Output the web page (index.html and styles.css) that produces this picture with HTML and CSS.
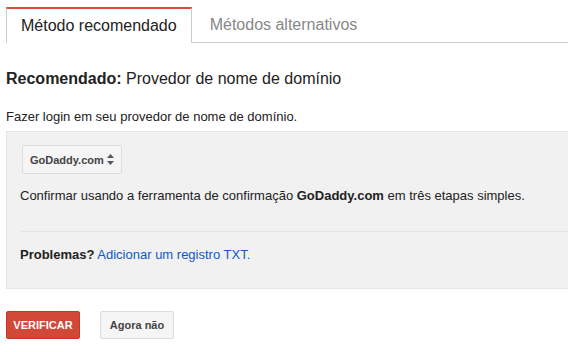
FILE: index.html
```html
<!DOCTYPE html>
<html>
<head>
	<meta charset="utf-8">
	<title>Verificar domínio</title>
	<link rel="stylesheet" href="styles.css">
</head>
<body>
	<div class="tabs">
		<div class="tab active">Método recomendado</div>
		<div class="tab">Métodos alternativos</div>
	</div>

	<h2 class="title"><b>Recomendado:</b> Provedor de nome de domínio</h2>
	<p class="intro">Fazer login em seu provedor de nome de domínio.</p>

	<div class="panel">
		<div class="select">
			<span>GoDaddy.com</span>
			<svg width="7" height="11" viewBox="0 0 7 11"><path d="M3.5 0L7 4H0z M3.5 11L0 7h7z" fill="#555"/></svg>
		</div>
		<p class="confirm">Confirmar usando a ferramenta de confirmação <b>GoDaddy.com</b> em três etapas simples.</p>
		<div class="trouble">
			<b>Problemas?</b> <a href="#">Adicionar um registro TXT.</a>
		</div>
	</div>

	<div class="actions">
		<button class="btn btn-red">VERIFICAR</button>
		<button class="btn">Agora não</button>
	</div>
</body>
</html>
```

FILE: styles.css
```css
*{
	margin: 0;
	padding: 0;
	box-sizing: border-box;
}
body{
	font-family: "Liberation Sans", Arial, sans-serif;
	color: #222;
	background: #fff;
	padding-left: 6px;
	width: 568px;
	overflow: hidden;
}
.tabs{
	display: flex;
	margin-top: 7px;
	border-bottom: 1px solid #ccc;
	height: 36px;
}
.tab{
	font-size: 16px;
	line-height: 35px;
	padding: 0 18px 0 18px;
	color: #888;
}
.tab.active{
	color: #222;
	background: #fff;
	border: 1px solid #ccc;
	border-top: 2px solid #dd4b39;
	border-bottom: none;
	height: 36px;
	line-height: 33px;
	padding: 0 14px;
}
.title{
	font-size: 16px;
	font-weight: normal;
	line-height: 20px;
	margin-top: 26px;
}
.intro{
	font-size: 13px;
	line-height: 16px;
	margin-top: 20px;
}
.panel{
	margin-top: 6px;
	background: #f1f1f1;
	border: 1px solid #e5e5e5;
	border-right: none;
	padding: 13px 0 25px 13px;
}
.select{
	display: inline-flex;
	align-items: center;
	justify-content: space-between;
	margin-left: 2px;
	width: 100px;
	height: 29px;
	padding: 0 7px;
	border: 1px solid #dcdcdc;
	border-radius: 2px;
	background: #f5f5f5;
	font-size: 11px;
	font-weight: bold;
	color: #444;
}
.confirm{
	font-size: 13px;
	line-height: 16px;
	margin-top: 14px;
}
.trouble{
	font-size: 13px;
	line-height: 16px;
	margin-top: 27px;
	padding-top: 15px;
	border-top: 1px solid #e5e5e5;
}
.trouble a{
	color: #15c;
	text-decoration: none;
}
.actions{
	display: flex;
	gap: 20px;
	margin-top: 22px;
}
.btn{
	font-family: "Liberation Sans", Arial, sans-serif;
	font-size: 11px;
	font-weight: bold;
	height: 28px;
	width: 74px;
	border: 1px solid #dcdcdc;
	border-radius: 2px;
	background: #f5f5f5;
	color: #444;
}
.btn-red{
	background: #d14836;
	border-color: #c53727;
	color: #fff;
}
```
